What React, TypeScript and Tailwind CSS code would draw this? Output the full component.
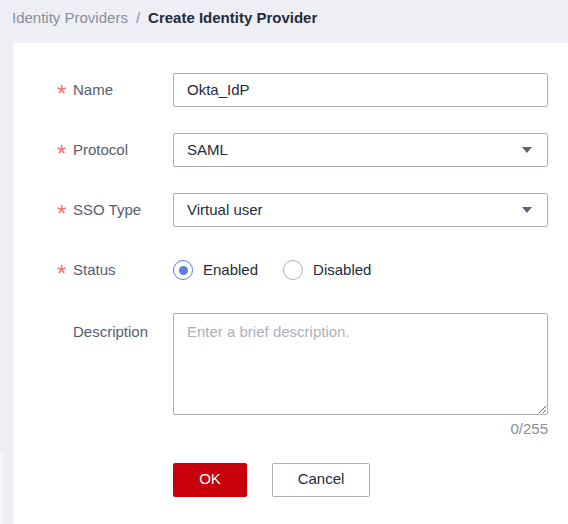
import React from "react";

const FONT = { fontFamily: '"Liberation Sans", Arial, sans-serif' };

function Label({ text, required = true }: { text: string; required?: boolean }) {
  return (
    <div className="flex w-[116px] shrink-0 items-center">
      <span className="flex w-[16px] pt-[8px] text-[24px] leading-none text-[#f66f6a]">{required ? "*" : ""}</span>
      <span className="text-[15px] text-[#575d6c]">{text}</span>
    </div>
  );
}

function Caret() {
  return (
    <svg width="10" height="6" viewBox="0 0 10 6" className="mr-[15px]">
      <path d="M0 0h10L5 6z" fill="#5f6270" />
    </svg>
  );
}

function Radio({ checked, label }: { checked?: boolean; label: string }) {
  return (
    <label className="flex items-center gap-[10px]">
      <span
        className={
          checked
            ? "flex size-[20px] items-center justify-center rounded-full border-[1.5px] border-[#5e7ce0] bg-white"
            : "flex size-[20px] items-center justify-center rounded-full border border-[#adb0b8] bg-white"
        }
      >
        {checked && <span className="size-[9px] rounded-full bg-[#5e7ce0]" />}
      </span>
      <span className="text-[15px] text-[#252b3a]">{label}</span>
    </label>
  );
}

export default function App() {
  return (
    <div className="h-[524px] w-[568px] overflow-hidden bg-[#eeeff5]" style={FONT}>
      {/* Breadcrumb */}
      <div className="flex h-[43px] items-center pl-[12px] pb-[7px] text-[15px]">
        <span className="text-[#8a8e99]">Identity Providers</span>
        <span className="mx-[8px] text-[#8a8e99]">/</span>
        <span className="font-bold text-[#252b3a]">Create Identity Provider</span>
      </div>

      <div className="flex">
        {/* left gutter */}
        <div className="w-[13px] shrink-0">
          <div className="mt-[409px] h-[80px] w-[3px] rounded-tr-[4px] bg-[#f4f5f9]" />
        </div>

        {/* Card */}
        <div className="h-[481px] flex-1 bg-white pl-[44px] pt-[30px]">
          <div className="flex flex-col">
            <div className="flex h-[34px] items-center">
              <Label text="Name" />
              <div className="flex h-[34px] w-[375px] items-center rounded-[2px] border border-[#adb0b8] px-[13px] text-[15px] text-[#252b3a]">
                Okta_IdP
              </div>
            </div>

            <div className="mt-[26px] flex h-[34px] items-center">
              <Label text="Protocol" />
              <div className="flex h-[34px] w-[375px] items-center justify-between rounded-[2px] border border-[#adb0b8] pl-[13px] text-[15px] text-[#252b3a]">
                <span>SAML</span>
                <Caret />
              </div>
            </div>

            <div className="mt-[26px] flex h-[34px] items-center">
              <Label text="SSO Type" />
              <div className="flex h-[34px] w-[375px] items-center justify-between rounded-[2px] border border-[#adb0b8] pl-[13px] text-[15px] text-[#252b3a]">
                <span>Virtual user</span>
                <Caret />
              </div>
            </div>

            <div className="mt-[26px] flex h-[34px] items-center">
              <Label text="Status" />
              <div className="flex items-center gap-[25px]">
                <Radio checked label="Enabled" />
                <Radio label="Disabled" />
              </div>
            </div>

            <div className="mt-[26px] flex items-start">
              <div className="pt-[8px]">
                <Label text="Description" required={false} />
              </div>
              <div className="flex w-[375px] flex-col">
                <textarea
                  placeholder="Enter a brief description."
                  className="h-[102px] w-[375px] rounded-[2px] border border-[#adb0b8] px-[13px] py-[7px] text-[15px] text-[#252b3a] outline-none placeholder:text-[#adb0b8]"
                  style={FONT}
                />
                <div className="mt-[3px] text-right text-[15px] text-[#8a8e99]">0/255</div>
              </div>
            </div>

            <div className="mt-[22px] flex gap-[25px] pl-[116px]">
              <button className="h-[34px] w-[74px] rounded-[2px] bg-[#c7000b] text-[15px] text-white">OK</button>
              <button className="h-[34px] w-[98px] rounded-[2px] border border-[#adb0b8] bg-white text-[15px] text-[#252b3a]">
                Cancel
              </button>
            </div>
          </div>
        </div>
      </div>
    </div>
  );
}
